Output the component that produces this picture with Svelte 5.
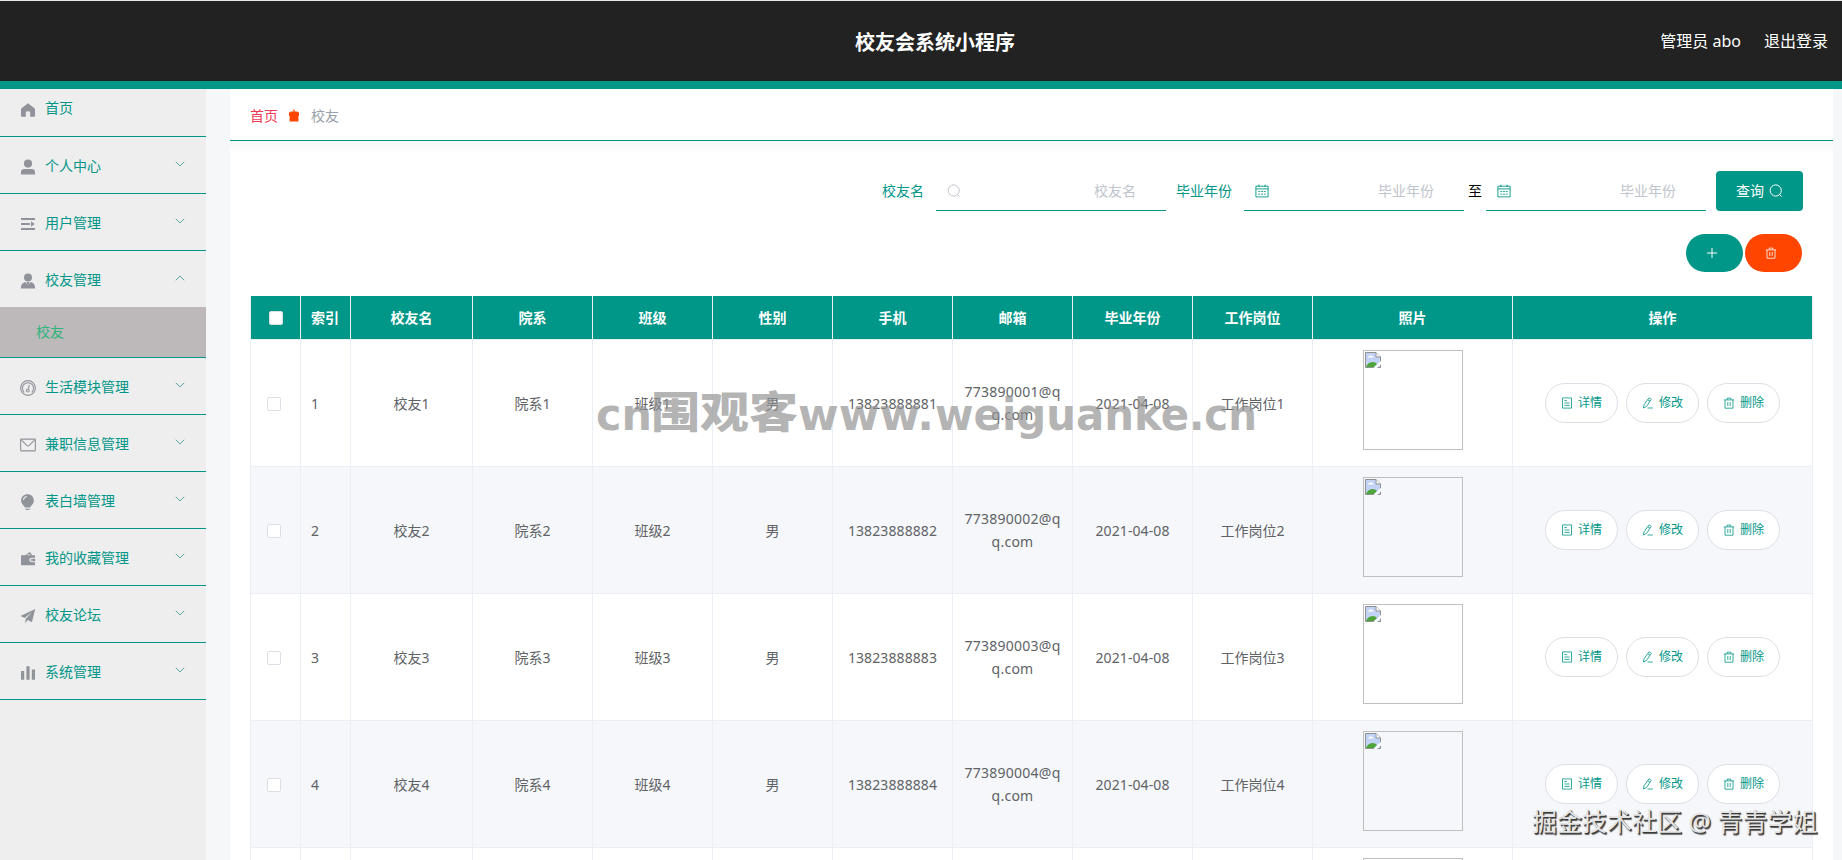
<script>
  const menus = [
    { t: '首页', i: 'home', leaf: true },
    { t: '个人中心', i: 'user' },
    { t: '用户管理', i: 'list' },
    { t: '校友管理', i: 'suit', sub: '校友' },
    { t: '生活模块管理', i: 'gauge' },
    { t: '兼职信息管理', i: 'mail' },
    { t: '表白墙管理', i: 'bulb' },
    { t: '我的收藏管理', i: 'wallet' },
    { t: '校友论坛', i: 'plane' },
    { t: '系统管理', i: 'bars' },
  ];
  const heads = ['校友名', '院系', '班级', '性别', '手机', '邮箱', '毕业年份', '工作岗位', '照片', '操作'];
  const rows = [1, 2, 3, 4, 5];
</script>

{#snippet menuIcon(n)}
  <svg class="mi" width="16" height="16" viewBox="0 0 16 16" fill="#909399">
    {#if n === 'home'}
      <path d="M8 1.2 1.6 6.2Q1 6.7 1 7.5V14Q1 14.7 1.7 14.7H5.8V10.5Q5.8 9.3 8 9.3T10.2 10.5V14.7H14.3Q15 14.7 15 14V7.5Q15 6.7 14.4 6.2Z" />
    {:else if n === 'user'}
      <circle cx="8" cy="4.6" r="4.1" /><path d="M1 15.4V13.2Q1 9.9 4.4 9.9H11.6Q15 9.9 15 13.2V15.4Z" />
    {:else if n === 'list'}
      <path d="M1 2H15V4H1ZM1 7H10V9H1ZM1 12H15V14H1ZM11 5.2 14.8 8 11 10.8Z" />
    {:else if n === 'suit'}
      <circle cx="8" cy="4.4" r="4" /><path d="M.8 15.6C.9 11.8 2.4 9.7 5.3 9.1L8 12.2 10.7 9.1C13.6 9.7 15.1 11.8 15.2 15.6Z" /><path d="M6.6 9H9.4L8.6 12H7.4Z" />
    {:else if n === 'gauge'}
      <g fill="none" stroke="#909399" stroke-width="1.1"><circle cx="8" cy="8" r="7.4" /><path d="M4.2 12.4A5.6 5.6 0 1 1 11.8 12.4" /><circle cx="7.8" cy="10.6" r="1.4" /><path d="M8.2 9.2 9.4 4.8" /></g>
    {:else if n === 'mail'}
      <g fill="none" stroke="#909399" stroke-width="1.1"><rect x=".6" y="2.1" width="14.8" height="11.8" rx=".8" /><path d="M1 2.6 6.8 8.3Q8 9.4 9.2 8.3L15 2.6" /></g>
    {:else if n === 'bulb'}
      <path d="M7.5 .2C3.8.2 1.1 2.9 1.1 6.4 1.1 9 2.7 10.6 4.2 12.2L4.9 13.6H10.1L10.8 12.2C12.3 10.6 13.9 9 13.9 6.4 13.9 2.9 11.2.2 7.5.2Z" /><path d="M5 14.8H10.2L9 15.9H6.2Z" /><path d="M3.6 6C3.6 4.2 5 2.8 6.8 2.6" fill="none" stroke="#eee" stroke-width="1.1" />
    {:else if n === 'wallet'}
      <path d="M1 4.2H5.4L8.8 1.6Q10 .8 10.8 1.9L12 4.2H15V6.8H11.8Q9.2 6.9 9.2 9T11.8 11.2H15V14.2H1Z" /><path d="M6.8 4.2 9.2 2.7 10 4.2Z" fill="#eee" /><path d="M12 7.8H15.2V10.2H12Q10.6 10.2 10.6 9T12 7.8Z" /><circle cx="12" cy="9" r=".6" fill="#eee" />
    {:else if n === 'plane'}
      <path d="M15.2 1 .5 8 4.6 10 12.4 3.8 5.8 10.7 5 15.2 7.8 12 11.9 14.2Z" />
    {:else}
      <path d="M1 6.1H4.2V14.7H1ZM6.4 1.3H9.6V14.7H6.4ZM11.8 4.6H15V14.7H11.8Z" />
    {/if}
  </svg>
{/snippet}

{#snippet lens()}
  <svg width="14" height="14" viewBox="0 0 14 14" fill="none" stroke="currentColor"><circle cx="6.7" cy="6.5" r="5.6" /><path d="M10.7 10.6 12.6 12.6" /></svg>
{/snippet}

{#snippet calendar()}
  <svg width="14" height="14" viewBox="0 0 14 14" fill="none" stroke="currentColor" stroke-width=".9"><path d="M.9 2.2H13.1V12.9H.9ZM.9 4.9H13.1M3.9.6V3M10.1.6V3" /><path d="M3.2 7.5H10.8M3.2 10.2H10.8" stroke-dasharray="2 .8" stroke-width=".8" /></svg>
{/snippet}

{#snippet trash()}
  <svg width="12" height="12" viewBox="0 0 12 12" fill="none" stroke="currentColor" stroke-width=".8"><path d="M.9 2.9H11.1M2 2.9V11.2H10V2.9M4.2 2.8V1.1H7.8V2.8M4.8 5V9M7.2 5V9" /></svg>
{/snippet}

<div class="app">
  <header>
    <h1>校友会系统小程序</h1>
    <div class="account"><span>管理员 abo</span><span>退出登录</span></div>
  </header>
  <div class="body">
    <aside>
      {#each menus as m}
        <div class="item">
          <div class="title" class:leaf={m.leaf}>
            {@render menuIcon(m.i)}
            <span>{m.t}</span>
            {#if !m.leaf}
              <svg class="arrow" class:up={m.sub} width="10" height="6" viewBox="0 0 10 6" fill="none" stroke="#5aa79d"><path d="M.8.8 5 4.9 9.2.8" /></svg>
            {/if}
          </div>
          {#if m.sub}<div class="sub">{m.sub}</div>{/if}
        </div>
      {/each}
    </aside>
    <main>
      <nav>
        <span class="first">首页</span>
        <svg width="12" height="14" viewBox="0 0 12 14" fill="#ff4500"><path d="M5.4.5H6.6V2.5H9.5V3.2H11V7H10.4V12.6H1.6V7H1V3.2H2.5V2.5H5.4Z" /></svg>
        <span>校友</span>
      </nav>
      <section class="panel">
        <div class="search">
          <label for="n">校友名</label>
          <div class="field wide"><i class="grey">{@render lens()}</i><span id="n">校友名</span></div>
          <label class="second" for="y">毕业年份</label>
          <div class="field"><i>{@render calendar()}</i><span id="y">毕业年份</span></div>
          <span class="to">至</span>
          <div class="field"><i>{@render calendar()}</i><span>毕业年份</span></div>
          <button class="query">查询 {@render lens()}</button>
        </div>
        <div class="tools">
          <button class="add" aria-label="add"><svg width="12" height="12" viewBox="0 0 12 12" stroke="currentColor"><path d="M6 1V11M1 6H11" /></svg></button>
          <button class="del" aria-label="delete">{@render trash()}</button>
        </div>
        <div class="table">
          <div class="row head">
            <div class="cell"><b class="box"></b></div>
            <div class="cell left">索引</div>
            {#each heads as h}<div class="cell">{h}</div>{/each}
          </div>
          {#each rows as r}
            <div class="row" class:even={r % 2 === 0}>
              <div class="cell check"><b class="box"></b></div>
              <div class="cell left">{r}</div>
              <div class="cell">校友{r}</div>
              <div class="cell">院系{r}</div>
              <div class="cell">班级{r}</div>
              <div class="cell">男</div>
              <div class="cell num">1382388888{r}</div>
              <div class="cell mailcell">77389000{r}@q<br />q.com</div>
              <div class="cell num">2021-04-08</div>
              <div class="cell">工作岗位{r}</div>
              <div class="cell photo">
                <div class="frame">
                  <svg width="16" height="16" viewBox="0 0 16 16"><path d="M.5.5H11L15.5 5V15.5H.5Z" fill="#c3d3f5" stroke="#909090" /><path d="M11 .5V5H15.5" fill="#fff" stroke="#909090" /><path d="M3 5.5Q3 4 4.5 4 5.5 2.6 7 4 8.6 4 8.6 5.5Z" fill="#fff" /><path d="M1 15Q2.5 10.5 7.5 10 10.5 10 12 12L9 15Z" fill="#4ea63b" /><path d="M8.2 16.2 16.2 8.6V12L11.8 16.2Z" fill="#fff" /></svg>
                </div>
              </div>
              <div class="cell actions">
                <button><svg width="12" height="12" viewBox="0 0 12 12" fill="none" stroke="currentColor" stroke-width=".8"><path d="M1.5.9H10.5V11.1H1.5ZM3.4 3.6H6M3.4 6H8.6M3.4 8.4H8.6" /></svg>详情</button>
                <button><svg width="12" height="12" viewBox="0 0 12 12" fill="none" stroke="currentColor" stroke-width=".8"><path d="M6.8 1.1Q8.2.6 9.2 2.4L4.6 9.4 1.4 11 2 7.8ZM5.8 2.8 8 4.2M5.5 11H10.8" /></svg>修改</button>
                <button>{@render trash()}删除</button>
              </div>
            </div>
          {/each}
        </div>
      </section>
    </main>
  </div>

  <svg class="mark" width="670" height="60" viewBox="0 0 670 60" fill="rgba(147,147,147,.7)">
    <text x="1" y="45" textLength="56" lengthAdjust="spacingAndGlyphs">cn</text>
    <text class="han" x="56" y="43" textLength="147" lengthAdjust="spacingAndGlyphs">围观客</text>
    <text x="203" y="45" textLength="136" lengthAdjust="spacingAndGlyphs">www.</text>
    <text x="340" y="45" textLength="254" lengthAdjust="spacingAndGlyphs">weiguanke</text>
    <text x="594" y="45" textLength="68" lengthAdjust="spacingAndGlyphs">.cn</text>
  </svg>
  <div class="credit">掘金技术社区 @ 青青学姐</div>
</div>

<style>
  :global(body) { margin: 0; overflow: hidden; }
  .app {
    position: relative; width: 1842px; height: 860px; overflow: hidden; background: #f6f7f9;
    display: flex; flex-direction: column; font: 14px/20px "Noto Sans", "Noto Sans CJK SC", sans-serif;
  }
  .app * { box-sizing: border-box; }
  header {
    flex: none; height: 89px; border-top: 1px solid #e3e9e7; border-bottom: 8px solid #009688; background: #222;
    display: grid; grid-template-columns: 1fr auto 1fr; align-items: center; color: #fff; padding: 0 14px 0 42px;
  }
  h1 { grid-column: 2; margin: 4px 0 0; font-size: 20px; line-height: 28px; font-weight: 700; }
  .account { display: flex; justify-content: flex-end; gap: 23px; font-size: 16px; }
  .body { flex: 1; min-height: 0; display: flex; }
  aside { width: 206px; background: #eee; color: #009688; flex: none; }
  .item { border-bottom: 1px solid #009688; }
  .title { height: 56px; display: flex; align-items: center; padding: 3px 20px 0; gap: 9px; }
  .title span { margin-bottom: 2px; }
  .title.leaf { height: 47px; padding: 0 20px 6px; }
  .title.leaf span { margin-bottom: 3px; }
  .mi { flex: none; }
  .arrow { margin: 0 1px 5px auto; }
  .arrow.up { transform: rotate(180deg); }
  .sub { height: 50px; line-height: 50px; padding-left: 36px; background: #bdb8b9; color: #2bb57c; }
  main { width: 1603px; margin-left: 24px; display: flex; flex-direction: column; }
  nav {
    flex: none; height: 52px; border-bottom: 1px solid #009688; background: #fff; padding: 2px 20px 0;
    display: flex; align-items: center; gap: 10px; color: #999fa9;
  }
  nav svg { margin: 0 1px 0 0; }
  nav .first { color: #f03a55; }
  .panel { flex: 1; background: linear-gradient(#f5f6f7, #fff 12px); padding: 30px 20px 0; }
  .search { height: 40px; display: flex; justify-content: flex-end; align-items: center; padding-right: 10px; color: #009688; }
  .field {
    width: 220px; height: 40px; border-bottom: 1px solid #009688; padding: 0 30px 0 11px;
    display: flex; align-items: center; justify-content: space-between; color: #c0c4cc;
  }
  .field.wide { width: 230px; margin: 0 10px 0 12px; }
  .field i { display: flex; color: #009688; }
  .field i.grey { color: #c0c4cc; }
  .second { margin-right: 12px; }
  .to { color: #000; padding: 0 4px; }
  button { font: inherit; cursor: pointer; border: 0; display: flex; align-items: center; justify-content: center; }
  .query { width: 87px; height: 40px; margin-left: 10px; background: #009688; color: #fff; border-radius: 4px; gap: 5px; padding: 0; }
  .tools { display: flex; justify-content: flex-end; gap: 2px; padding-right: 11px; margin-top: 23px; }
  .tools button { width: 57px; height: 38px; border-radius: 20px; color: #fff; background: #009688; padding: 0 5px 0 0; }
  .tools .del { background: #ff4500; }
  .table { width: 1563px; margin-top: 24px; border-left: 1px solid #ebeef5; color: #606266; }
  .row {
    display: grid; grid-template-columns: 50px 50px 122px repeat(7, 120px) 200px 300px;
    height: 127px; background: #fff;
  }
  .row.even { background: #f5f7fa; }
  .cell {
    border-right: 1px solid #ebeef5; border-bottom: 1px solid #ebeef5; padding-top: 1px;
    display: flex; align-items: center; justify-content: center; text-align: center; min-width: 0; white-space: nowrap;
  }
  .cell.left { justify-content: flex-start; padding-left: 10px; }
  .cell.num { letter-spacing: .1px; }
  .row.head { height: 44px; color: #fff; font-weight: 700; background: #009688; }
  .box { width: 14px; height: 14px; border: 1px solid #dcdfe6; border-radius: 2px; background: #fff; }
  .cell.check { padding-right: 4px; }
  .cell.mailcell { line-height: 23px; letter-spacing: .25px; padding-top: 0; }
  .cell.photo { align-items: flex-start; padding-top: 10px; }
  .frame { width: 100px; height: 100px; border: 1px solid #bfbfbf; padding: 1px; }
  .frame svg { display: block; }
  .cell.actions { gap: 8px; padding-top: 0; }
  .actions button {
    width: 73px; height: 40px; border: 1px solid #dcdfe6; border-radius: 20px; background: #fff;
    color: #009688; font-size: 12px; gap: 5px; padding: 0;
  }
  .mark { position: absolute; left: 595px; top: 385px; }
  .mark text { font: 700 45px "DejaVu Sans", sans-serif; }
  .mark .han { font: 900 43px "Noto Sans CJK SC", sans-serif; }
  .credit {
    position: absolute; left: 1532px; top: 803px; font-size: 25px; line-height: 36px; color: #e4e4e4; white-space: nowrap;
    text-shadow: 1px 1px 0 #3a3a3a, 1.5px 1.5px 1px #555;
  }
</style>
